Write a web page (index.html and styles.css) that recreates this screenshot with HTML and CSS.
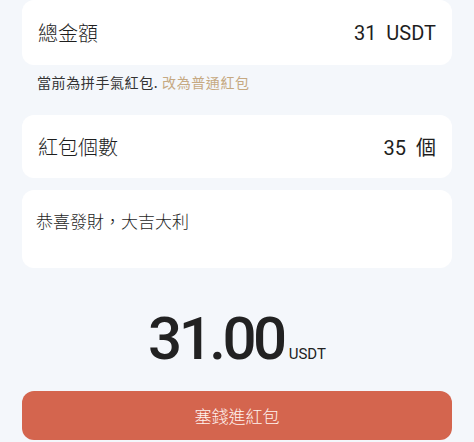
FILE: index.html
```html
<!DOCTYPE html>
<html lang="zh-Hant">
<head>
<meta charset="utf-8">
<link rel="stylesheet" href="styles.css">
</head>
<body>
<div class="page">
  <div class="card row first">
    <span class="label">總金額</span>
    <span class="value">31&nbsp;&nbsp;USDT</span>
  </div>
  <div class="note">當前為拼手氣紅包. <span class="link">改為普通紅包</span></div>
  <div class="card row">
    <span class="label">紅包個數</span>
    <span class="value">35&nbsp;&nbsp;個</span>
  </div>
  <div class="card msg">恭喜發財，大吉大利</div>
  <div class="amount">
    <span class="big">31.00</span>
    <span class="unit">USDT</span>
  </div>
  <button class="btn">塞錢進紅包</button>
</div>
</body>
</html>
```

FILE: styles.css
```css
html, body {
  margin: 0;
  padding: 0;
  background: #f4f7fb;
}
body {
  font-family: "Noto Sans CJK TC", "Noto Sans", sans-serif;
  color: #222;
}
.page {
  display: flex;
  flex-direction: column;
  padding: 0 22px;
}
.card {
  background: #fff;
  border-radius: 12px;
}
.row {
  height: 63px;
  display: flex;
  align-items: center;
  justify-content: space-between;
  padding: 0 16px 0 16px;
  font-size: 20px;
  font-weight: 300;
  color: #1e1e1e;
}
.first {
  height: 65px;
}
.label {
  font-family: "Noto Sans CJK TC", sans-serif;
}
.value {
  font-family: "Roboto", "Noto Sans CJK TC", sans-serif;
  font-size: 20px;
  font-weight: 400;
}
.note {
  height: 50px;
  box-sizing: border-box;
  padding: 7px 15px 0;
  font-size: 14px;
  letter-spacing: 0.6px;
  line-height: 20px;
  color: #333;
  font-weight: 400;
}
.link {
  color: #c6a982;
}
.msg {
  margin-top: 12px;
  height: 78px;
  box-sizing: border-box;
  padding: 19px 14px 0;
  font-size: 17px;
  line-height: 24px;
  color: #1e1e1e;
  font-weight: 300;
}
.amount {
  display: flex;
  justify-content: center;
  align-items: baseline;
  gap: 5px;
  padding-top: 40px;
  height: 123px;
  box-sizing: border-box;
}
.big {
  font-family: "Roboto", sans-serif;
  font-weight: 500;
  font-size: 60px;
  line-height: 62px;
  letter-spacing: -3.5px;
  color: #222;
}
.unit {
  font-family: "Roboto", sans-serif;
  font-size: 15px;
  color: #222;
}
.btn {
  height: 49px;
  border: none;
  border-radius: 12px;
  background: #d4654e;
  color: #fff3ef;
  font-family: "Noto Sans CJK TC", sans-serif;
  font-weight: 300;
  font-size: 17px;
  padding: 0;
}
```
